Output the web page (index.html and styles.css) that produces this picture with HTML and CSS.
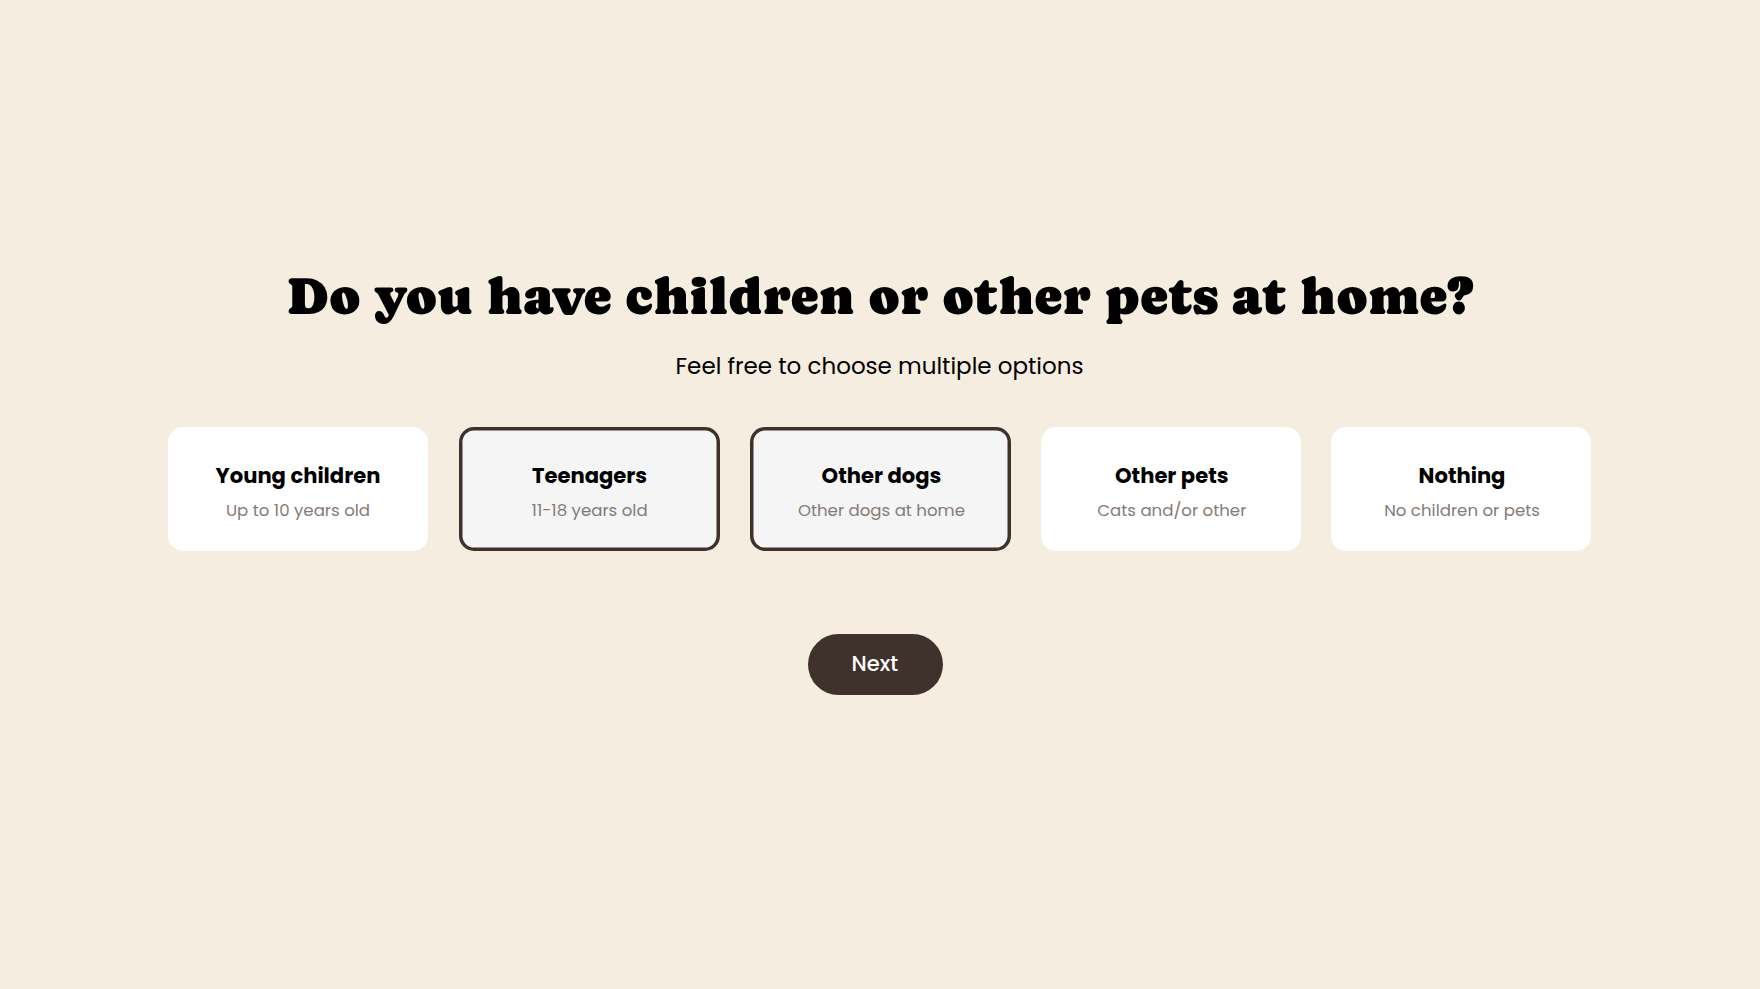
FILE: index.html
```html
<!DOCTYPE html>
<html lang="en">
<head>
<meta charset="utf-8">
<title>Children or other pets</title>
<link rel="stylesheet" href="styles.css">
</head>
<body>
<main class="quiz">
  <h1 class="question">Do you have children or other pets at home?</h1>
  <p class="hint">Feel free to choose multiple options</p>
  <div class="options">
    <button class="card card-first"><span class="title">Young children</span><span class="desc">Up to 10 years old</span></button>
    <button class="card selected"><span class="title">Teenagers</span><span class="desc">11-18 years old</span></button>
    <button class="card selected card-late"><span class="title">Other dogs</span><span class="desc">Other dogs at home</span></button>
    <button class="card card-late"><span class="title">Other pets</span><span class="desc">Cats and/or other</span></button>
    <button class="card card-late"><span class="title">Nothing</span><span class="desc">No children or pets</span></button>
  </div>
  <button class="next">Next</button>
</main>
</body>
</html>
```

FILE: styles.css
```css
* { box-sizing: border-box; }
body {
  margin: 0;
  background: #f5eddf;
  color: #000;
  font-family: Poppins, Inter, sans-serif;
}
.quiz {
  height: 989px;
  padding-top: 261px;
  overflow: hidden;
}
.question {
  margin: 0;
  height: 70px;
  text-align: center;
  white-space: nowrap;
  font: 400 52.75px/70px Caprasimo, "Noto Serif", serif;
  letter-spacing: 0.3px;
}
.hint {
  margin: 17px 0 0;
  height: 36px;
  padding-right: 1px;
  text-align: center;
  font-size: 23px;
  line-height: 36px;
}
.options {
  display: grid;
  grid-template-columns: 261px 261px 260.5px 260px 260.3px;
  gap: 30.1px;
  margin: 43px 0 0 168px;
}
.card {
  display: flex;
  flex-direction: column;
  align-items: center;
  height: 123.5px;
  padding: 35px 0 0;
  border: 0;
  border-radius: 15px;
  background: #fff;
  color: #000;
  font-family: inherit;
  white-space: nowrap;
}
.card-first { margin-right: 1px; }
.card-late { padding-left: 2px; }
.selected {
  background: #f5f5f5;
  box-shadow: inset 0 0 0 3.5px #3f312b;
}
.title {
  font-size: 21.1px;
  font-weight: 700;
  line-height: 28px;
}
.desc {
  margin-top: 9px;
  color: #857b76;
  font-size: 16.6px;
  line-height: 24px;
}
.next {
  display: block;
  width: 135.5px;
  height: 61px;
  margin: 83px 0 0 807.5px;
  padding: 0 1px 2px 0;
  border: 0;
  border-radius: 31px;
  background: #3f312b;
  color: #fff;
  font: 500 21.1px Poppins, Inter, sans-serif;
}
```
